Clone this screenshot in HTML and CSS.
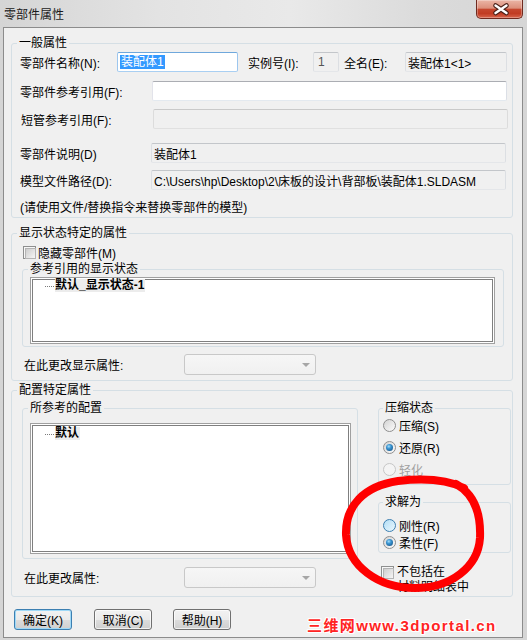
FILE: index.html
```html
<!DOCTYPE html>
<html lang="zh-CN">
<head>
<meta charset="utf-8">
<title>零部件属性</title>
<link rel="stylesheet" href="styles.css">
</head>
<body>
<div class="window">
  <div class="titlebar">
    <span class="title">零部件属性</span>
    <div class="close">
      <svg width="47" height="18" viewBox="0 0 47 18">
        <path d="M18.5 5.5 L29.5 13 M29.5 5.5 L18.5 13" stroke="#4a2018" stroke-width="4.6" stroke-linecap="round" fill="none"/>
        <path d="M18.5 5.5 L29.5 13 M29.5 5.5 L18.5 13" stroke="#ffffff" stroke-width="2.4" stroke-linecap="round" fill="none"/>
      </svg>
    </div>
  </div>
  <div class="client">
    <fieldset class="grp g1">
      <legend>一般属性</legend>
      <div class="b1">
        <div class="row r1">
          <span class="lbl l-name">零部件名称(N):</span>
          <div class="tb focus"><span class="sel">装配体1</span></div>
          <span class="lbl l-inst">实例号(I):</span>
          <div class="tb ro inst">1</div>
          <span class="lbl l-full">全名(E):</span>
          <div class="tb ro full">装配体1&lt;1&gt;</div>
        </div>
        <div class="row r2">
          <span class="lbl l-ref">零部件参考引用(F):</span>
          <div class="tb ref"></div>
        </div>
        <div class="row r3">
          <span class="lbl l-short">短管参考引用(F):</span>
          <div class="tb dis"></div>
        </div>
        <div class="row r4">
          <span class="lbl l-desc">零部件说明(D)</span>
          <div class="tb ro desc">装配体1</div>
        </div>
        <div class="row r5">
          <span class="lbl l-desc">模型文件路径(D):</span>
          <div class="tb ro desc path">C:\Users\hp\Desktop\2\床板的设计\背部板\装配体1.SLDASM</div>
        </div>
        <div class="note">(请使用文件/替换指令来替换零部件的模型)</div>
      </div>
    </fieldset>

    <fieldset class="grp g2">
      <legend>显示状态特定的属性</legend>
      <div class="b2">
        <div class="chkrow"><span class="chk"></span><span class="ctext">隐藏零部件(M)</span></div>
        <fieldset class="sub s1">
          <legend>参考引用的显示状态</legend>
          <div class="list l1">
            <div class="item"><span class="dots"></span><span class="itext">默认_显示状态-1</span></div>
          </div>
        </fieldset>
        <div class="row crow">
          <span class="lbl l-chg">在此更改显示属性:</span>
          <div class="combo"><span class="arrow"></span></div>
        </div>
      </div>
    </fieldset>

    <fieldset class="grp g3">
      <legend>配置特定属性</legend>
      <div class="b3">
        <div class="lcol">
          <fieldset class="sub s2">
            <legend>所参考的配置</legend>
            <div class="list l2">
              <div class="item"><span class="dots"></span><span class="itext">默认</span></div>
            </div>
          </fieldset>
          <div class="row crow c2">
            <span class="lbl l-chg">在此更改属性:</span>
            <div class="combo"><span class="arrow"></span></div>
          </div>
        </div>
        <div class="rcol">
          <fieldset class="sub s3">
            <legend>压缩状态</legend>
            <div class="rrow first"><span class="radio"></span><span class="rtext">压缩(S)</span></div>
            <div class="rrow"><span class="radio on"></span><span class="rtext">还原(R)</span></div>
            <div class="rrow"><span class="radio off"></span><span class="rtext dim">轻化</span></div>
          </fieldset>
          <fieldset class="sub s4">
            <legend>求解为</legend>
            <div class="rrow a"><span class="radio hot"></span><span class="rtext">刚性(R)</span></div>
            <div class="rrow b"><span class="radio on"></span><span class="rtext">柔性(F)</span></div>
          </fieldset>
          <div class="chk2"><span class="chk"></span><span class="ctext2">不包括在<br>材料明细表中</span></div>
        </div>
      </div>
    </fieldset>

    <div class="btns">
      <div class="btn def">确定(K)</div>
      <div class="btn b-cancel">取消(C)</div>
      <div class="btn b-help">帮助(H)</div>
    </div>
  </div>

  <svg class="mark" width="527" height="640" viewBox="0 0 527 640">
    <path d="M456 484 C474 494 481 514 480 538 C478 567 451 588 415 588 C378 588 348 566 346 535 C345 506 364 486 398 481 C424 478 446 479 464 488" fill="none" stroke="#ff0000" stroke-width="8" stroke-linecap="round" stroke-linejoin="round"/>
  </svg>
  <div class="watermark">三维网www.3dportal.cn</div>
</div>
</body>
</html>
```
FILE: styles.css
```css
* { box-sizing: border-box; }
html, body { margin: 0; padding: 0; }
body { background: #dcdcdc; }

.window {
  position: relative;
  width: 527px;
  height: 640px;
  overflow: hidden;
  background: linear-gradient(90deg, #d5d5d5 0%, #e3e3e3 30%, #e9e9e9 55%, #dbdbdb 80%, #d6d6d6 100%);
  font-family: "Liberation Sans", "Noto Sans CJK SC", sans-serif;
  font-size: 12px;
  color: #000;
}

.titlebar { height: 27px; display: flex; align-items: flex-start; }
.title {
  margin: 6px 0 0 4px;
  line-height: 16px;
  font-size: 12px;
  color: #1b1b1b;
  font-family: "Noto Sans CJK SC", sans-serif;
}
.close {
  margin-left: auto;
  margin-right: 4px;
  width: 47px;
  height: 19px;
  border: 1px solid #6f2a1f;
  border-top: none;
  border-radius: 0 0 5px 5px;
  background: linear-gradient(180deg, #ebb5a6 0%, #dc8f7b 45%, #c5462e 52%, #c13c23 75%, #d8654c 100%);
  box-shadow: inset 0 0 0 1px rgba(255, 255, 255, 0.3);
}
.close svg { display: block; }

.client {
  margin-left: 3px;
  width: 520px;
  height: 611px;
  border: 1px solid #8c8c8c;
  background: #f0f0f0;
}

/* group boxes */
.grp, .sub {
  padding: 0;
  min-width: 0;
  border: 1px solid #d5dfe5;
  border-radius: 3px;
}
.grp { margin: 0 0 0 7px; width: 502px; }
legend { margin-left: 5px; padding: 0 2px; line-height: 14px; height: 14px; }
.g1 { margin-top: 8px; }
.g2 { margin-top: 8px; }
.g3 { margin-top: 2px; }

.b1 { padding: 2px 0 0 8px; }
.row { display: flex; align-items: center; height: 20px; }
.r2 { margin-top: 9px; }
.r3 { margin-top: 8px; }
.r4 { margin-top: 14px; }
.r5 { margin-top: 7px; }
.note { margin-top: 10px; height: 17px; line-height: 16px; }

.lbl { flex: none; white-space: nowrap; }
.l-name { width: 97px; }
.l-inst { width: 65px; margin-left: 10px; }
.l-full { width: 61px; margin-left: 5px; }
.l-ref { width: 132px; }
.l-short { width: 133px; padding-left: 1px; }
.l-desc { width: 131px; }
.l-chg { width: 160px; }

.tb {
  flex: none;
  height: 20px;
  border: 1px solid;
  border-color: #abadb3 #dbdfe6 #e3e9ef #e2e3ea;
  background: #fff;
  border-radius: 2px;
  padding: 0 2px;
  display: flex;
  align-items: center;
  white-space: nowrap;
  overflow: hidden;
}
.focus { width: 121px; border-color: #6fa8dc #9cc6ee #a9cff2 #9cc6ee; }
.sel { background: #3399ff; color: #fff; line-height: 14px; padding: 0 1px; }
.ro { background: #f0f0f0; border-color: #c3c6ca #dcdfe3 #e4e6e9 #dcdfe3; }
.inst { width: 26px; padding-left: 4px; color: #555; }
.full { width: 102px; }
.ref { width: 355px; }
.dis { width: 355px; background: #f0f0f0; border-color: #c9c9c9 #dcdcdc #e0e0e0 #dcdcdc; }
.desc { width: 355px; }

/* group 2 */
.b2 { padding-bottom: 5px; }
.chkrow { display: flex; align-items: center; height: 14px; margin: 5px 0 0 11px; }
.chk {
  flex: none;
  position: relative;
  width: 13px;
  height: 13px;
  border: 1px solid #8e8f8f;
  background: #f7f7f7;
}
.chk::after {
  content: "";
  position: absolute;
  left: 1px;
  top: 1px;
  width: 9px;
  height: 9px;
  border: 1px solid #b4b4b4;
  background: linear-gradient(135deg, #cdcdcd, #f6f6f6);
}
.ctext { margin-left: 2px; }

.s1 { margin: 3px 0 0 10px; width: 482px; padding-bottom: 2px; }
.list {
  background: #fff;
  border: 1px solid #a0a0a0;
  box-shadow: inset 0 0 0 1px #fff, inset 0 0 0 2px #7f7f7f;
}
.l1 { margin: 1px 0 0 7px; width: 465px; height: 67px; }
.item { display: flex; align-items: center; height: 14px; padding-left: 14px; }
.dots { flex: none; width: 9px; height: 1px; border-top: 1px dotted #7a7a7a; margin: 3px 1px 0 0; }
.itext { font-weight: bold; background: #ececec; line-height: 13px; padding: 0 1px 0 0; }

.crow { height: 21px; margin: 7px 0 0 12px; }
.combo {
  flex: none;
  width: 132px;
  height: 21px;
  border: 1px solid #c8c8c8;
  border-radius: 3px;
  background: linear-gradient(#f6f6f6, #f0f0f0);
  display: flex;
  align-items: center;
  justify-content: flex-end;
  padding-right: 5px;
}
.arrow { width: 0; height: 0; border-left: 4px solid transparent; border-right: 4px solid transparent; border-top: 4px solid #a6a6a6; }

/* group 3 */
.b3 { display: flex; align-items: flex-start; }
.lcol { flex: none; width: 346px; padding-bottom: 8px; }
.s2 { margin: 4px 0 0 10px; width: 336px; padding-bottom: 4px; }
.l2 { margin: 8px 0 0 7px; width: 321px; height: 131px; padding-top: 2px; }
.c2 { margin-top: 8px; }

.rcol { flex: none; width: 133px; margin-left: 18px; }
.s3 { margin-top: 4px; width: 133px; padding-bottom: 8px; }
.s4 { margin-top: 10px; width: 133px; padding-bottom: 3px; }
.s3 legend, .s4 legend { margin-left: 4px; }
.rrow { display: flex; align-items: center; height: 14px; margin: 8px 0 0 4px; }
.rrow.first { margin-top: 3px; }
.rrow.a { margin-top: 9px; }
.rrow.b { margin-top: 3px; }
.rtext { margin-left: 3px; }
.dim { color: #a0a0a0; }

.radio {
  flex: none;
  position: relative;
  width: 13px;
  height: 13px;
  border-radius: 50%;
  border: 1px solid #8f8f8f;
  background: linear-gradient(135deg, #d3d3d3, #fcfcfc);
}
.radio.on::after {
  content: "";
  position: absolute;
  left: 2px;
  top: 2px;
  width: 7px;
  height: 7px;
  border-radius: 50%;
  background: radial-gradient(circle at 40% 35%, #a6def9 0, #3a95d2 35%, #0f4677 100%);
}
.radio.hot { border-color: #3c7fb1; background: linear-gradient(135deg, #b3def6, #eaf7fd); }
.radio.off { border-color: #c6c6c6; background: #f4f4f4; }

.chk2 { display: flex; align-items: flex-start; margin: 12px 0 0 5px; }
.chk2 .chk { margin-top: 1px; }
.ctext2 { margin-left: 3px; line-height: 15px; }

/* buttons */
.btns { display: flex; margin: 12px 0 0 10px; }
.btn {
  flex: none;
  width: 58px;
  height: 21px;
  border: 1px solid #707070;
  border-radius: 3px;
  background: linear-gradient(#f2f2f2 0%, #ebebeb 50%, #dddddd 51%, #cfcfcf 100%);
  box-shadow: inset 0 0 0 1px rgba(255, 255, 255, 0.7);
  display: flex;
  align-items: center;
  justify-content: center;
  white-space: nowrap;
}
.btn.def { border-color: #3c7fb1; box-shadow: inset 0 0 0 1px #9fd9f7; }
.b-cancel { margin-left: 22px; }
.b-help { margin-left: 21px; }

/* overlays */
.mark { position: absolute; left: 0; top: 0; pointer-events: none; }
.watermark {
  position: absolute;
  left: 307px;
  top: 617px;
  font: bold 15px "Liberation Sans", "Noto Sans CJK SC", sans-serif;
  letter-spacing: 1.4px;
  line-height: 18px;
  color: #ff2424;
  white-space: nowrap;
  text-shadow: 1px 0 #fff, -1px 0 #fff, 0 1px #fff, 0 -1px #fff, 1px 1px #fff, -1px -1px #fff, 1px -1px #fff, -1px 1px #fff;
}
```
